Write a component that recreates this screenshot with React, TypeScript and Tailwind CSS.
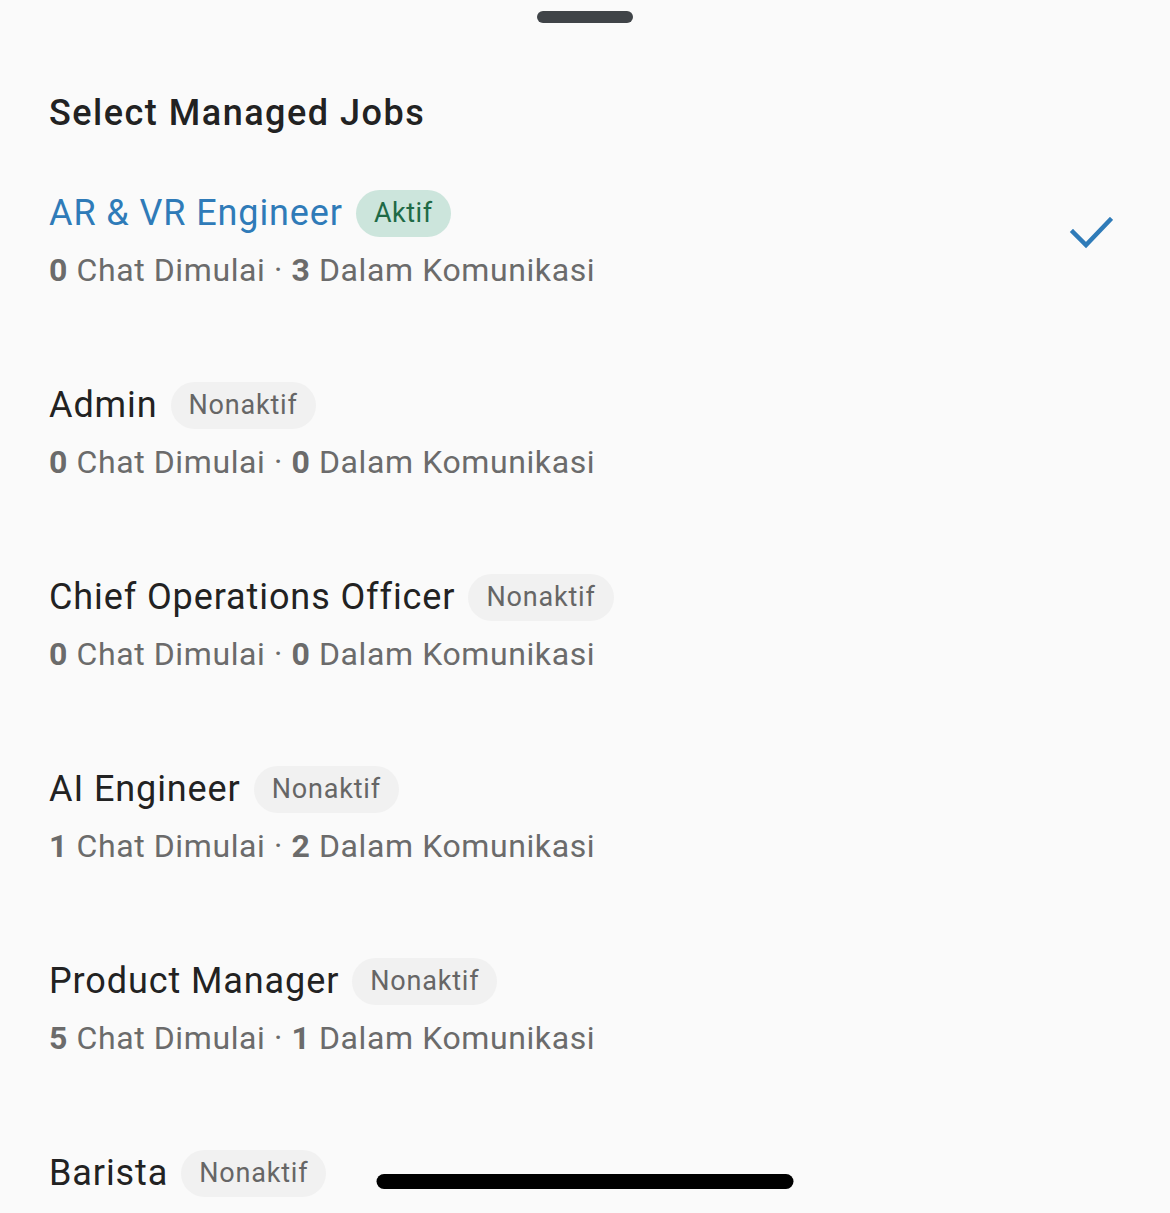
import React from "react";

type Job = {
  title: string;
  active: boolean;
  started: number;
  talking: number;
  selected?: boolean;
};

const jobs: Job[] = [
  { title: "AR & VR Engineer", active: true, started: 0, talking: 3, selected: true },
  { title: "Admin", active: false, started: 0, talking: 0 },
  { title: "Chief Operations Officer", active: false, started: 0, talking: 0 },
  { title: "AI Engineer", active: false, started: 1, talking: 2 },
  { title: "Product Manager", active: false, started: 5, talking: 1 },
  { title: "Barista", active: false, started: 0, talking: 0 },
];

function JobRow({ job }: { job: Job }) {
  return (
    <div className="flex items-center pr-[57px]">
      <div className="flex-1">
        <div className="flex h-[48px] items-center gap-[13px]">
          <span
            className={
              "text-[36px] leading-none tracking-[0.9px] " +
              (job.selected ? "text-[#2f7bb8]" : "text-[#222222]")
            }
          >
            {job.title}
          </span>
          {job.active ? (
            <span className="flex h-[47px] items-center rounded-full bg-[#cce5dc] px-[18px] text-[27px] tracking-[0.5px] text-[#1f6a46]">
              Aktif
            </span>
          ) : (
            <span className="flex h-[47px] items-center rounded-full bg-[#f1f1f1] px-[18px] text-[27px] tracking-[0.8px] text-[#666666]">
              Nonaktif
            </span>
          )}
        </div>
        <div className="mt-[13px] h-[40px] text-[32px] leading-[40px] tracking-[0.6px] text-[#6b6b6b]">
          <span className="font-bold">{job.started}</span> Chat Dimulai ·{" "}
          <span className="font-bold">{job.talking}</span> Dalam Komunikasi
        </div>
      </div>
      {job.selected && (
        <svg width="44" height="34" viewBox="0 0 44 34" className="mb-[12px]">
          <path
            d="M4 15 L17 28 L41 3"
            fill="none"
            stroke="#2f7bb8"
            strokeWidth="4.5"
            strokeLinecap="square"
          />
        </svg>
      )}
    </div>
  );
}

export default function App() {
  return (
    <div
      className="relative h-[1213px] w-full overflow-hidden bg-[#fafafa]"
      style={{ fontFamily: "Roboto, 'Noto Sans', sans-serif" }}
    >
      <div className="flex justify-center pt-[11px]">
        <div className="h-[12px] w-[96px] rounded-full bg-[#404448]" />
      </div>
      <h1 className="mt-[69px] pl-[49px] text-[36px] font-medium leading-[43px] tracking-[1.5px] text-[#222222]">
        Select Managed Jobs
      </h1>
      <div className="mt-[54px] flex flex-col gap-[91px] pl-[49px]">
        {jobs.map((j) => (
          <JobRow key={j.title} job={j} />
        ))}
      </div>
      <div className="absolute bottom-[24px] left-1/2 h-[15px] w-[417px] -translate-x-1/2 rounded-full bg-black" />
    </div>
  );
}
